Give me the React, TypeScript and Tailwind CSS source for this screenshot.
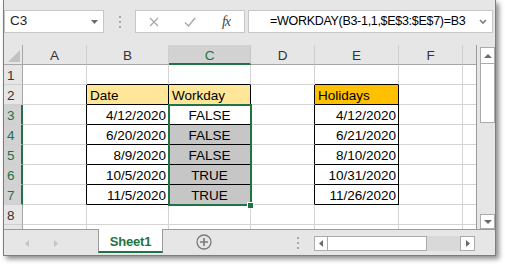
import React from 'react';
import clsx from 'clsx';

// column letters, index 0 = row header, last = partial G
const COLS = ['', 'A', 'B', 'C', 'D', 'E', 'F', 'G'];

interface SheetCellData {
  text: string;
  align: 'left' | 'right' | 'center';
  bg?: string;
}

const cells: Record<string, SheetCellData> = {
  B2: { text: 'Date', align: 'left', bg: 'bg-[#ffe699]' },
  C2: { text: 'Workday', align: 'left', bg: 'bg-[#ffe699]' },
  E2: { text: 'Holidays', align: 'left', bg: 'bg-[#ffc000]' },
  B3: { text: '4/12/2020', align: 'right' },
  B4: { text: '6/20/2020', align: 'right' },
  B5: { text: '8/9/2020', align: 'right' },
  B6: { text: '10/5/2020', align: 'right' },
  B7: { text: '11/5/2020', align: 'right' },
  C3: { text: 'FALSE', align: 'center' },
  C4: { text: 'FALSE', align: 'center', bg: 'bg-[#c6c6c6]' },
  C5: { text: 'FALSE', align: 'center', bg: 'bg-[#c6c6c6]' },
  C6: { text: 'TRUE', align: 'center', bg: 'bg-[#c6c6c6]' },
  C7: { text: 'TRUE', align: 'center', bg: 'bg-[#c6c6c6]' },
  E3: { text: '4/12/2020', align: 'right' },
  E4: { text: '6/21/2020', align: 'right' },
  E5: { text: '8/10/2020', align: 'right' },
  E6: { text: '10/31/2020', align: 'right' },
  E7: { text: '11/26/2020', align: 'right' },
};

function Dots({ className }: { className?: string }) {
  return (
    <div className={clsx('flex flex-col gap-[3px]', className)}>
      <span className="block w-[2px] h-[2px] bg-[#a6a6a6]" />
      <span className="block w-[2px] h-[2px] bg-[#a6a6a6]" />
      <span className="block w-[2px] h-[2px] bg-[#a6a6a6]" />
    </div>
  );
}

function FormulaBar() {
  return (
    <div className="flex h-[45px] pt-[10px] items-start">
      {/* name box */}
      <div className="w-[100px] h-[23px] bg-white border border-[#c6c6c6] flex items-center justify-between pl-[5px] pr-[5px]">
        <span className="text-[13.5px] text-[#222]">C3</span>
        <svg width="7" height="4" viewBox="0 0 7 4">
          <polygon points="0,0 7,0 3.5,4" fill="#6b6b6b" />
        </svg>
      </div>
      <div className="w-[31px] h-[23px] flex items-center justify-center">
        <Dots />
      </div>
      {/* cancel / enter / fx */}
      <div className="w-[110px] h-[23px] bg-white border border-[#c6c6c6] grid grid-cols-3 items-center justify-items-center">
        <svg width="10" height="10" viewBox="0 0 10 10">
          <path d="M1 1 L9 9 M9 1 L1 9" stroke="#a8a8a8" strokeWidth="1.3" />
        </svg>
        <svg width="12" height="10" viewBox="0 0 12 10">
          <path d="M1 5.5 L4.5 9 L11 1" stroke="#a8a8a8" strokeWidth="1.4" fill="none" />
        </svg>
        <span className="font-['Liberation_Serif',serif] italic text-[14px] text-[#444] leading-none tracking-[-1px]">fx</span>
      </div>
      <div className="w-[3px]" />
      <div className="w-[245px] h-[23px] bg-white border border-[#c6c6c6] flex items-center justify-between pl-[21px] pr-[5px]">
        <span className="text-[12.5px] tracking-[-0.3px] text-black whitespace-nowrap">=WORKDAY(B3-1,1,$E$3:$E$7)=B3</span>
        <svg width="8" height="5" viewBox="0 0 8 5">
          <path d="M1 1 L4 4 L7 1" stroke="#7a7a7a" strokeWidth="1.6" fill="none" />
        </svg>
      </div>
    </div>
  );
}

function HeaderRow() {
  return (
    <>
      <div className="bg-[#e6e6e6] border-r border-b border-[#a6a6a6] flex items-end justify-end pr-[2px] pb-[2px]">
        <svg width="12" height="12" viewBox="0 0 12 12">
          <polygon points="12,0 12,12 0,12" fill="#c2c2c2" />
        </svg>
      </div>
      {COLS.slice(1).map((c, i) => (
        <div
          key={c}
          className={clsx(
            'text-center text-[13.5px] leading-[22px]',
            c === 'C'
              ? 'bg-[#d2d2d2] text-[#217346] border-b-2 border-b-[#217346] border-r border-r-[#c6c6c6] leading-[21px]'
              : 'bg-[#e6e6e6] text-[#333] border-b border-b-[#a6a6a6] border-r border-r-[#cfcfcf]',
            i === COLS.length - 2 && 'border-r-0'
          )}
        >
          {c === 'G' ? '' : c}
        </div>
      ))}
    </>
  );
}

function SheetRow({ row }: { row: number }) {
  const selected = row >= 3 && row <= 7;
  const partial = row === 9;
  return (
    <>
      <div
        className={clsx(
          'text-[13.5px] leading-[22px] pl-[3px] border-b border-b-[#cfcfcf]',
          selected
            ? 'bg-[#d2d2d2] text-[#217346] border-r-2 border-r-[#217346]'
            : 'bg-[#e6e6e6] text-[#333] border-r border-r-[#a6a6a6]',
          partial && 'border-b-0'
        )}
      >
        {partial ? '' : row}
      </div>
      {COLS.slice(1).map((c, i) => {
        const col = i + 1;
        const cell = cells[c + row];
        const blackRight = row >= 2 && row <= 7 && col >= 1 && col <= 5;
        const blackBottom = row >= 1 && row <= 7 && (c === 'B' || c === 'C' || c === 'E');
        return (
          <div
            key={c}
            className={clsx(
              'text-[13.5px] leading-[22px] text-black whitespace-nowrap overflow-hidden border-r',
              blackRight ? 'border-r-black' : 'border-r-[#d4d4d4]',
              !partial && 'border-b',
              blackBottom ? 'border-b-black' : 'border-b-[#d4d4d4]',
              c === 'G' && 'border-r-0',
              cell?.bg ?? 'bg-white',
              cell?.align === 'right' && 'text-right pr-[2px]',
              cell?.align === 'left' && 'pl-[3px]',
              cell?.align === 'center' && 'text-center'
            )}
          >
            {cell?.text}
          </div>
        );
      })}
    </>
  );
}

function Sheet() {
  return (
    <div className="relative w-[473px] border-r border-[#9b9b9b] grid grid-cols-[19px_64px_82px_82px_64px_84px_64px_13px] grid-rows-[20px_repeat(8,20px)_4px]">
      <HeaderRow />
      {[1, 2, 3, 4, 5, 6, 7, 8, 9].map((r) => (
        <SheetRow key={r} row={r} />
      ))}
      {/* selection C3:C7 */}
      <div className="absolute left-[164px] top-[59px] w-[84px] h-[102px] border-2 border-[#217346] pointer-events-none" />
      <div className="absolute left-[243px] top-[157px] w-[7px] h-[7px] bg-[#217346] border border-white" />
    </div>
  );
}

function VScroll() {
  return (
    <div className="w-[18px] pl-[3px] pt-[2px] flex flex-col">
      <div className="h-[17px] bg-white border border-[#ababab] flex items-center justify-center">
        <svg width="8" height="4" viewBox="0 0 8 4">
          <polygon points="0,4 8,4 4,0" fill="#6b6b6b" />
        </svg>
      </div>
      <div className="h-[60px] bg-white border border-[#ababab] -mt-px" />
      <div className="flex-1" />
      <div className="h-[15px] bg-white border border-[#ababab] flex items-center justify-center">
        <svg width="8" height="4" viewBox="0 0 8 4">
          <polygon points="0,0 8,0 4,4" fill="#6b6b6b" />
        </svg>
      </div>
    </div>
  );
}

function TabBar() {
  return (
    <div className="flex h-[26px] items-start">
      <div className="w-[94px] h-[26px] border-t border-[#9b9b9b] flex items-start pt-[10px] pl-[21px] gap-[25px]">
        <svg width="4" height="7" viewBox="0 0 4 7">
          <polygon points="4,0 4,7 0,3.5" fill="#c4c4c4" />
        </svg>
        <svg width="4" height="7" viewBox="0 0 4 7">
          <polygon points="0,0 0,7 4,3.5" fill="#c4c4c4" />
        </svg>
      </div>
      <div className="w-[65px] h-[24px] bg-white border-x border-[#9b9b9b] border-b-2 border-b-[#217346] flex items-center justify-center pt-[3px]">
        <span className="text-[13px] font-bold text-[#217346] tracking-[-0.2px]">Sheet1</span>
      </div>
      <div className="flex-1 h-[26px] border-t border-[#9b9b9b] flex items-start">
        <div className="w-[82px] h-[25px] flex items-center justify-center pb-[1px]">
          <svg width="16" height="16" viewBox="0 0 16 16">
            <circle cx="8" cy="8" r="7" stroke="#7a7a7a" strokeWidth="1.3" fill="none" />
            <path d="M8 4 V12 M4 8 H12" stroke="#7a7a7a" strokeWidth="1.6" />
          </svg>
        </div>
        <Dots className="ml-[52px] mt-[7px]" />
        <div className="ml-[15px] mt-[6px] w-[161px] h-[15px] flex">
          <div className="w-[14px] h-[15px] bg-white border border-[#ababab] flex items-center justify-center">
            <svg width="4" height="7" viewBox="0 0 4 7">
              <polygon points="4,0 4,7 0,3.5" fill="#6b6b6b" />
            </svg>
          </div>
          <div className="w-[100px] h-[15px] bg-white border border-[#ababab] -ml-px" />
          <div className="flex-1 bg-[#d9d9d9]" />
          <div className="w-[15px] h-[15px] bg-white border border-[#ababab] flex items-center justify-center">
            <svg width="4" height="7" viewBox="0 0 4 7">
              <polygon points="0,0 0,7 4,3.5" fill="#6b6b6b" />
            </svg>
          </div>
        </div>
      </div>
    </div>
  );
}

export default function App() {
  return (
    <div className="w-[505px] h-[267px] bg-white font-['Liberation_Sans',Arial,sans-serif]">
      <div className="ml-[3px] w-[493px] h-[256px] bg-[#e6e6e6] border-x border-b border-[#7d7d7d] shadow-[3px_3px_5px_rgba(0,0,0,0.45)] flex flex-col">
        <FormulaBar />
        <div className="flex h-[184px]">
          <Sheet />
          <VScroll />
        </div>
        <TabBar />
      </div>
    </div>
  );
}
